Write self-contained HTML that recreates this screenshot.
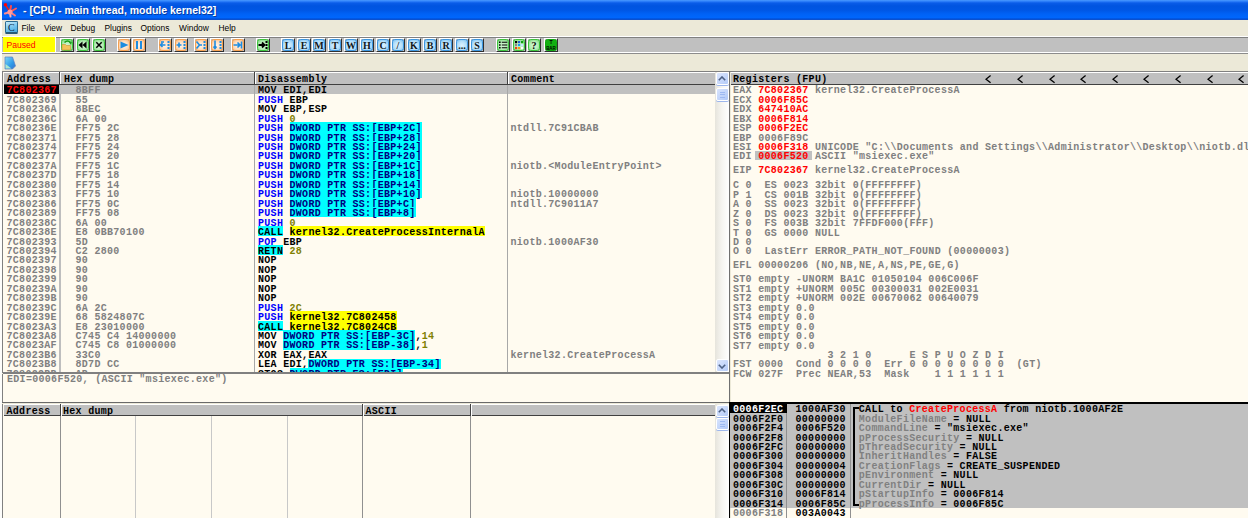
<!DOCTYPE html><html><head><meta charset="utf-8"><style>
html,body{margin:0;padding:0;width:1248px;height:518px;overflow:hidden;background:#ECE9D8;position:relative}
div{position:absolute;box-sizing:border-box}
.t{font-family:"Liberation Mono",monospace;font-weight:bold;font-size:10px;letter-spacing:0.300px;line-height:9.45px;white-space:pre;padding-top:1.5px}
.s{font-family:"Liberation Sans",sans-serif;white-space:pre}
</style></head><body>
<div style="left:0;top:0;width:2px;height:518px;background:#FDFDFB"></div>
<div style="left:2px;top:0;width:1246px;height:20.6px;background:linear-gradient(#4A9AFF 0px,#2A7CF8 1.5px,#0A5CE8 3px,#0054E0 6px,#0056E4 10px,#0062F6 14px,#0066FC 17.5px,#0050DA 19px,#2A50B0 20.6px)"></div>
<svg style="position:absolute;left:2px;top:1px" width="16" height="18" viewBox="0 0 16 18"><g stroke-linecap="round"><line x1="8" y1="11" x2="3.5" y2="4" stroke="#E02020" stroke-width="1.6"/><line x1="8" y1="11" x2="9" y2="5" stroke="#FF4848" stroke-width="2"/><line x1="8" y1="11" x2="14" y2="7.5" stroke="#FF5A5A" stroke-width="2"/><line x1="8" y1="11" x2="13" y2="14.5" stroke="#FF7A7A" stroke-width="2"/><line x1="8" y1="11" x2="8.5" y2="15.5" stroke="#FFB0B0" stroke-width="2"/><line x1="8" y1="11" x2="3" y2="12.5" stroke="#FF8A8A" stroke-width="2.2"/></g><circle cx="3.5" cy="3.8" r="1.7" fill="#FF0000"/><circle cx="8" cy="11" r="2.6" fill="#FF9A9A"/></svg>
<div class="s" style="left:23px;top:3px;font-size:10.5px;font-weight:bold;color:#0A246A;opacity:.6;line-height:14px;transform:translate(1px,1px)">- [CPU - main thread, module kernel32]</div>
<div class="s" style="left:23px;top:3px;font-size:10.5px;font-weight:bold;color:#fff;line-height:14px">- [CPU - main thread, module kernel32]</div>
<div style="left:2px;top:20px;width:1246px;height:17px;background:#ECE9D8"></div>
<div style="left:5px;top:21.2px;width:12.6px;height:13.2px;border-radius:1.5px;background:linear-gradient(160deg,#C6ECFC,#6CC0EC 60%,#4AA8E0);border:1px solid #2A6A90;border-bottom:2px solid #2A5A78"></div>
<div class="s" style="left:5px;top:22.8px;width:12.6px;font-family:'Liberation Serif';font-size:10px;color:#0A2A48;text-align:center;line-height:10px">C</div>
<div class="s" style="left:21.5px;top:22.5px;font-size:8.4px;color:#000;line-height:10px">File</div>
<div class="s" style="left:44px;top:22.5px;font-size:8.4px;color:#000;line-height:10px">View</div>
<div class="s" style="left:70.5px;top:22.5px;font-size:8.4px;color:#000;line-height:10px">Debug</div>
<div class="s" style="left:104.5px;top:22.5px;font-size:8.4px;color:#000;line-height:10px">Plugins</div>
<div class="s" style="left:140.5px;top:22.5px;font-size:8.4px;color:#000;line-height:10px">Options</div>
<div class="s" style="left:179px;top:22.5px;font-size:8.4px;color:#000;line-height:10px">Window</div>
<div class="s" style="left:218.5px;top:22.5px;font-size:8.4px;color:#000;line-height:10px">Help</div>
<div style="left:2px;top:35.6px;width:1246px;height:1px;background:#FFFFFF"></div>
<div style="left:2px;top:36.6px;width:1246px;height:17px;background:#C0C0C0;border-top:1px solid #808080;border-bottom:1px solid #8C8C8C"></div>
<div style="left:2px;top:52.4px;width:1246px;height:0.8px;background:#FFFFFF"></div>
<div style="left:3px;top:37.4px;width:53px;height:15px;background:#FFFF00;border-right:1px solid #fff"></div>
<div class="s" style="left:6.5px;top:40px;font-size:8.6px;color:#FF0000;line-height:10px">Paused</div>
<div style="left:60.2px;top:37.8px;width:14px;height:14px;background:#C0C0C0;border-left:1px solid #FFF;border-top:1px solid #FFF;border-right:1px solid #303030;border-bottom:1px solid #303030"></div>
<div style="left:61.2px;top:38.8px;width:12px;height:12px;background:radial-gradient(circle at 50% 55%,#D8F8D8 0%,#B4ECB4 55%,#6AD46A 100%);border:1px solid #3CC43C;border-radius:2.5px"></div>
<svg style="position:absolute;left:61.2px;top:38.8px" width="12" height="12" viewBox="0 0 12 12"><path d="M1 5.5 h3.5 l1 1 h4 v4.5 h-8.5z" fill="#F2C45A" stroke="#C89030" stroke-width="0.6"/><path d="M3.5 3.5 Q6.5 0.5 9.5 3.5" fill="none" stroke="#18A018" stroke-width="1.6"/><path d="M8 3.2 l3 -0.6 l-1 3.4z" fill="#18A018"/></svg>
<div style="left:75.9px;top:37.8px;width:14px;height:14px;background:#C0C0C0;border-left:1px solid #FFF;border-top:1px solid #FFF;border-right:1px solid #303030;border-bottom:1px solid #303030"></div>
<div style="left:76.9px;top:38.8px;width:12px;height:12px;background:radial-gradient(circle at 50% 55%,#D8F8D8 0%,#B4ECB4 55%,#6AD46A 100%);border:1px solid #3CC43C;border-radius:2.5px"></div>
<svg style="position:absolute;left:76.9px;top:38.8px" width="12" height="12" viewBox="0 0 12 12"><path d="M1.5 6 l4 -3.5 v7z M5.5 6 l4 -3.5 v7z" fill="#000"/></svg>
<div style="left:91.5px;top:37.8px;width:14px;height:14px;background:#C0C0C0;border-left:1px solid #FFF;border-top:1px solid #FFF;border-right:1px solid #303030;border-bottom:1px solid #303030"></div>
<div style="left:92.5px;top:38.8px;width:12px;height:12px;background:radial-gradient(circle at 50% 55%,#D8F8D8 0%,#B4ECB4 55%,#6AD46A 100%);border:1px solid #3CC43C;border-radius:2.5px"></div>
<svg style="position:absolute;left:92.5px;top:38.8px" width="12" height="12" viewBox="0 0 12 12"><path d="M3.3 3.3 l5.4 5.4 M8.7 3.3 l-5.4 5.4" stroke="#000" stroke-width="1.5"/></svg>
<div style="left:116.8px;top:37.8px;width:14px;height:14px;background:#C0C0C0;border-left:1px solid #FFF;border-top:1px solid #FFF;border-right:1px solid #303030;border-bottom:1px solid #303030"></div>
<div style="left:117.8px;top:38.8px;width:12px;height:12px;background:radial-gradient(circle at 50% 55%,#FFF4EA 0%,#FFDCBC 55%,#F8B070 100%);border:1px solid #F5A050;border-radius:2.5px"></div>
<svg style="position:absolute;left:117.8px;top:38.8px" width="12" height="12" viewBox="0 0 12 12"><path d="M2.5 2.5 l8 3.5 l-8 3.5z" fill="#1E8CE0"/></svg>
<div style="left:132.3px;top:37.8px;width:14px;height:14px;background:#C0C0C0;border-left:1px solid #FFF;border-top:1px solid #FFF;border-right:1px solid #303030;border-bottom:1px solid #303030"></div>
<div style="left:133.3px;top:38.8px;width:12px;height:12px;background:radial-gradient(circle at 50% 55%,#FFF4EA 0%,#FFDCBC 55%,#F8B070 100%);border:1px solid #F5A050;border-radius:2.5px"></div>
<svg style="position:absolute;left:133.3px;top:38.8px" width="12" height="12" viewBox="0 0 12 12"><path d="M3 2 h2 v8 h-2z M7 2 h2 v8 h-2z" fill="#1E8CE0"/></svg>
<div style="left:158.0px;top:37.8px;width:14px;height:14px;background:#C0C0C0;border-left:1px solid #FFF;border-top:1px solid #FFF;border-right:1px solid #303030;border-bottom:1px solid #303030"></div>
<div style="left:159.0px;top:38.8px;width:12px;height:12px;background:radial-gradient(circle at 50% 55%,#FFF4EA 0%,#FFDCBC 55%,#F8B070 100%);border:1px solid #F5A050;border-radius:2.5px"></div>
<svg style="position:absolute;left:159.0px;top:38.8px" width="12" height="12" viewBox="0 0 12 12"><path d="M1.5 6 h5 M3.5 4 l-2 2 l2 2 M2 3 h3" stroke="#1E8CE0" stroke-width="1.6" fill="none"/><path d="M8.5 2h2v2h-2z M8.5 5h2v2h-2z M8.5 8h2v2h-2z" fill="#1E8CE0"/></svg>
<div style="left:173.5px;top:37.8px;width:14px;height:14px;background:#C0C0C0;border-left:1px solid #FFF;border-top:1px solid #FFF;border-right:1px solid #303030;border-bottom:1px solid #303030"></div>
<div style="left:174.5px;top:38.8px;width:12px;height:12px;background:radial-gradient(circle at 50% 55%,#FFF4EA 0%,#FFDCBC 55%,#F8B070 100%);border:1px solid #F5A050;border-radius:2.5px"></div>
<svg style="position:absolute;left:174.5px;top:38.8px" width="12" height="12" viewBox="0 0 12 12"><path d="M1.5 6 h5 M4 3.5 v5" stroke="#1E8CE0" stroke-width="1.6" fill="none"/><path d="M8.5 2h2v2h-2z M8.5 5h2v2h-2z M8.5 8h2v2h-2z" fill="#1E8CE0"/></svg>
<div style="left:194.0px;top:37.8px;width:14px;height:14px;background:#C0C0C0;border-left:1px solid #FFF;border-top:1px solid #FFF;border-right:1px solid #303030;border-bottom:1px solid #303030"></div>
<div style="left:195.0px;top:38.8px;width:12px;height:12px;background:radial-gradient(circle at 50% 55%,#FFF4EA 0%,#FFDCBC 55%,#F8B070 100%);border:1px solid #F5A050;border-radius:2.5px"></div>
<svg style="position:absolute;left:195.0px;top:38.8px" width="12" height="12" viewBox="0 0 12 12"><path d="M1.5 2.5 l3 3.5 l-3 3.5 M4 6 h3" stroke="#1E8CE0" stroke-width="1.6" fill="none"/><path d="M8.5 2h2v2h-2z M8.5 5h2v2h-2z M8.5 8h2v2h-2z" fill="#1E8CE0"/></svg>
<div style="left:209.6px;top:37.8px;width:14px;height:14px;background:#C0C0C0;border-left:1px solid #FFF;border-top:1px solid #FFF;border-right:1px solid #303030;border-bottom:1px solid #303030"></div>
<div style="left:210.6px;top:38.8px;width:12px;height:12px;background:radial-gradient(circle at 50% 55%,#FFF4EA 0%,#FFDCBC 55%,#F8B070 100%);border:1px solid #F5A050;border-radius:2.5px"></div>
<svg style="position:absolute;left:210.6px;top:38.8px" width="12" height="12" viewBox="0 0 12 12"><path d="M4 1.5 v8 M2.5 7.5 l1.5 2 l1.5 -2" stroke="#1E8CE0" stroke-width="1.6" fill="none"/><path d="M8.5 2h2v2h-2z M8.5 5h2v2h-2z M8.5 8h2v2h-2z" fill="#1E8CE0"/></svg>
<div style="left:230.6px;top:37.8px;width:14px;height:14px;background:#C0C0C0;border-left:1px solid #FFF;border-top:1px solid #FFF;border-right:1px solid #303030;border-bottom:1px solid #303030"></div>
<div style="left:231.6px;top:38.8px;width:12px;height:12px;background:radial-gradient(circle at 50% 55%,#FFF4EA 0%,#FFDCBC 55%,#F8B070 100%);border:1px solid #F5A050;border-radius:2.5px"></div>
<svg style="position:absolute;left:231.6px;top:38.8px" width="12" height="12" viewBox="0 0 12 12"><path d="M1.5 6 h6 M5.5 3.5 l2.5 2.5 l-2.5 2.5 M9.5 2.5 v7" stroke="#1E8CE0" stroke-width="1.6" fill="none"/></svg>
<div style="left:256.3px;top:37.8px;width:14px;height:14px;background:#C0C0C0;border-left:1px solid #FFF;border-top:1px solid #FFF;border-right:1px solid #303030;border-bottom:1px solid #303030"></div>
<div style="left:257.3px;top:38.8px;width:12px;height:12px;background:radial-gradient(circle at 50% 55%,#D8F8D8 0%,#B4ECB4 55%,#6AD46A 100%);border:1px solid #3CC43C;border-radius:2.5px"></div>
<svg style="position:absolute;left:257.3px;top:38.8px" width="12" height="12" viewBox="0 0 12 12"><path d="M1.5 6 h5 M5 3.5 l2.5 2.5 l-2.5 2.5" stroke="#000" stroke-width="1.8" fill="none"/><path d="M8.5 2h2v2h-2z M8.5 5h2v2h-2z M8.5 8h2v2h-2z" fill="#000"/></svg>
<div style="left:281.1px;top:37.8px;width:14px;height:14px;background:#C0C0C0;border-left:1px solid #FFF;border-top:1px solid #FFF;border-right:1px solid #303030;border-bottom:1px solid #303030"></div>
<div style="left:282.1px;top:38.8px;width:12px;height:12px;background:radial-gradient(circle at 50% 55%,#DDF2FF 0%,#B6E0FA 55%,#6CBAF0 100%);border:1px solid #3C96E0;border-radius:2.5px"></div>
<svg style="position:absolute;left:282.1px;top:38.8px" width="12" height="12" viewBox="0 0 12 12"><text x="6" y="9.6" text-anchor="middle" font-family="Liberation Serif" font-weight="bold" font-size="10" fill="#101820">L</text></svg>
<div style="left:296.7px;top:37.8px;width:14px;height:14px;background:#C0C0C0;border-left:1px solid #FFF;border-top:1px solid #FFF;border-right:1px solid #303030;border-bottom:1px solid #303030"></div>
<div style="left:297.7px;top:38.8px;width:12px;height:12px;background:radial-gradient(circle at 50% 55%,#DDF2FF 0%,#B6E0FA 55%,#6CBAF0 100%);border:1px solid #3C96E0;border-radius:2.5px"></div>
<svg style="position:absolute;left:297.7px;top:38.8px" width="12" height="12" viewBox="0 0 12 12"><text x="6" y="9.6" text-anchor="middle" font-family="Liberation Serif" font-weight="bold" font-size="10" fill="#101820">E</text></svg>
<div style="left:312.4px;top:37.8px;width:14px;height:14px;background:#C0C0C0;border-left:1px solid #FFF;border-top:1px solid #FFF;border-right:1px solid #303030;border-bottom:1px solid #303030"></div>
<div style="left:313.4px;top:38.8px;width:12px;height:12px;background:radial-gradient(circle at 50% 55%,#DDF2FF 0%,#B6E0FA 55%,#6CBAF0 100%);border:1px solid #3C96E0;border-radius:2.5px"></div>
<svg style="position:absolute;left:313.4px;top:38.8px" width="12" height="12" viewBox="0 0 12 12"><text x="6" y="9.6" text-anchor="middle" font-family="Liberation Serif" font-weight="bold" font-size="10" fill="#101820">M</text></svg>
<div style="left:328.4px;top:37.8px;width:14px;height:14px;background:#C0C0C0;border-left:1px solid #FFF;border-top:1px solid #FFF;border-right:1px solid #303030;border-bottom:1px solid #303030"></div>
<div style="left:329.4px;top:38.8px;width:12px;height:12px;background:radial-gradient(circle at 50% 55%,#DDF2FF 0%,#B6E0FA 55%,#6CBAF0 100%);border:1px solid #3C96E0;border-radius:2.5px"></div>
<svg style="position:absolute;left:329.4px;top:38.8px" width="12" height="12" viewBox="0 0 12 12"><text x="6" y="9.6" text-anchor="middle" font-family="Liberation Serif" font-weight="bold" font-size="10" fill="#101820">T</text></svg>
<div style="left:344.0px;top:37.8px;width:14px;height:14px;background:#C0C0C0;border-left:1px solid #FFF;border-top:1px solid #FFF;border-right:1px solid #303030;border-bottom:1px solid #303030"></div>
<div style="left:345.0px;top:38.8px;width:12px;height:12px;background:radial-gradient(circle at 50% 55%,#DDF2FF 0%,#B6E0FA 55%,#6CBAF0 100%);border:1px solid #3C96E0;border-radius:2.5px"></div>
<svg style="position:absolute;left:345.0px;top:38.8px" width="12" height="12" viewBox="0 0 12 12"><text x="6" y="9.6" text-anchor="middle" font-family="Liberation Serif" font-weight="bold" font-size="10" fill="#101820">W</text></svg>
<div style="left:360.0px;top:37.8px;width:14px;height:14px;background:#C0C0C0;border-left:1px solid #FFF;border-top:1px solid #FFF;border-right:1px solid #303030;border-bottom:1px solid #303030"></div>
<div style="left:361.0px;top:38.8px;width:12px;height:12px;background:radial-gradient(circle at 50% 55%,#DDF2FF 0%,#B6E0FA 55%,#6CBAF0 100%);border:1px solid #3C96E0;border-radius:2.5px"></div>
<svg style="position:absolute;left:361.0px;top:38.8px" width="12" height="12" viewBox="0 0 12 12"><text x="6" y="9.6" text-anchor="middle" font-family="Liberation Serif" font-weight="bold" font-size="10" fill="#101820">H</text></svg>
<div style="left:375.7px;top:37.8px;width:14px;height:14px;background:#C0C0C0;border-left:1px solid #FFF;border-top:1px solid #FFF;border-right:1px solid #303030;border-bottom:1px solid #303030"></div>
<div style="left:376.7px;top:38.8px;width:12px;height:12px;background:radial-gradient(circle at 50% 55%,#DDF2FF 0%,#B6E0FA 55%,#6CBAF0 100%);border:1px solid #3C96E0;border-radius:2.5px"></div>
<svg style="position:absolute;left:376.7px;top:38.8px" width="12" height="12" viewBox="0 0 12 12"><text x="6" y="9.6" text-anchor="middle" font-family="Liberation Serif" font-weight="bold" font-size="10" fill="#101820">C</text></svg>
<div style="left:391.2px;top:37.8px;width:14px;height:14px;background:#C0C0C0;border-left:1px solid #FFF;border-top:1px solid #FFF;border-right:1px solid #303030;border-bottom:1px solid #303030"></div>
<div style="left:392.2px;top:38.8px;width:12px;height:12px;background:radial-gradient(circle at 50% 55%,#DDF2FF 0%,#B6E0FA 55%,#6CBAF0 100%);border:1px solid #3C96E0;border-radius:2.5px"></div>
<svg style="position:absolute;left:392.2px;top:38.8px" width="12" height="12" viewBox="0 0 12 12"><text x="6" y="9.6" text-anchor="middle" font-family="Liberation Serif" font-weight="bold" font-size="10" fill="#101820">/</text></svg>
<div style="left:407.3px;top:37.8px;width:14px;height:14px;background:#C0C0C0;border-left:1px solid #FFF;border-top:1px solid #FFF;border-right:1px solid #303030;border-bottom:1px solid #303030"></div>
<div style="left:408.3px;top:38.8px;width:12px;height:12px;background:radial-gradient(circle at 50% 55%,#DDF2FF 0%,#B6E0FA 55%,#6CBAF0 100%);border:1px solid #3C96E0;border-radius:2.5px"></div>
<svg style="position:absolute;left:408.3px;top:38.8px" width="12" height="12" viewBox="0 0 12 12"><text x="6" y="9.6" text-anchor="middle" font-family="Liberation Serif" font-weight="bold" font-size="10" fill="#101820">K</text></svg>
<div style="left:423.0px;top:37.8px;width:14px;height:14px;background:#C0C0C0;border-left:1px solid #FFF;border-top:1px solid #FFF;border-right:1px solid #303030;border-bottom:1px solid #303030"></div>
<div style="left:424.0px;top:38.8px;width:12px;height:12px;background:radial-gradient(circle at 50% 55%,#DDF2FF 0%,#B6E0FA 55%,#6CBAF0 100%);border:1px solid #3C96E0;border-radius:2.5px"></div>
<svg style="position:absolute;left:424.0px;top:38.8px" width="12" height="12" viewBox="0 0 12 12"><text x="6" y="9.6" text-anchor="middle" font-family="Liberation Serif" font-weight="bold" font-size="10" fill="#101820">B</text></svg>
<div style="left:438.7px;top:37.8px;width:14px;height:14px;background:#C0C0C0;border-left:1px solid #FFF;border-top:1px solid #FFF;border-right:1px solid #303030;border-bottom:1px solid #303030"></div>
<div style="left:439.7px;top:38.8px;width:12px;height:12px;background:radial-gradient(circle at 50% 55%,#DDF2FF 0%,#B6E0FA 55%,#6CBAF0 100%);border:1px solid #3C96E0;border-radius:2.5px"></div>
<svg style="position:absolute;left:439.7px;top:38.8px" width="12" height="12" viewBox="0 0 12 12"><text x="6" y="9.6" text-anchor="middle" font-family="Liberation Serif" font-weight="bold" font-size="10" fill="#101820">R</text></svg>
<div style="left:454.7px;top:37.8px;width:14px;height:14px;background:#C0C0C0;border-left:1px solid #FFF;border-top:1px solid #FFF;border-right:1px solid #303030;border-bottom:1px solid #303030"></div>
<div style="left:455.7px;top:38.8px;width:12px;height:12px;background:radial-gradient(circle at 50% 55%,#DDF2FF 0%,#B6E0FA 55%,#6CBAF0 100%);border:1px solid #3C96E0;border-radius:2.5px"></div>
<svg style="position:absolute;left:455.7px;top:38.8px" width="12" height="12" viewBox="0 0 12 12"><text x="6" y="9.6" text-anchor="middle" font-family="Liberation Serif" font-weight="bold" font-size="10" fill="#101820">...</text></svg>
<div style="left:470.3px;top:37.8px;width:14px;height:14px;background:#C0C0C0;border-left:1px solid #FFF;border-top:1px solid #FFF;border-right:1px solid #303030;border-bottom:1px solid #303030"></div>
<div style="left:471.3px;top:38.8px;width:12px;height:12px;background:radial-gradient(circle at 50% 55%,#DDF2FF 0%,#B6E0FA 55%,#6CBAF0 100%);border:1px solid #3C96E0;border-radius:2.5px"></div>
<svg style="position:absolute;left:471.3px;top:38.8px" width="12" height="12" viewBox="0 0 12 12"><text x="6" y="9.6" text-anchor="middle" font-family="Liberation Serif" font-weight="bold" font-size="10" fill="#101820">S</text></svg>
<div style="left:495.9px;top:37.8px;width:14px;height:14px;background:#C0C0C0;border-left:1px solid #FFF;border-top:1px solid #FFF;border-right:1px solid #303030;border-bottom:1px solid #303030"></div>
<div style="left:496.9px;top:38.8px;width:12px;height:12px;background:radial-gradient(circle at 50% 55%,#D8F8D8 0%,#B4ECB4 55%,#6AD46A 100%);border:1px solid #3CC43C;border-radius:2.5px"></div>
<svg style="position:absolute;left:496.9px;top:38.8px" width="12" height="12" viewBox="0 0 12 12"><path d="M2 2.5h1.6v1.6h-1.6z M2 5.2h1.6v1.6h-1.6z M2 7.9h1.6v1.6h-1.6z" fill="#000"/><path d="M4.8 3.3h5.5 M4.8 6h5.5 M4.8 8.7h5.5" stroke="#000" stroke-width="1.1"/></svg>
<div style="left:511.6px;top:37.8px;width:14px;height:14px;background:#C0C0C0;border-left:1px solid #FFF;border-top:1px solid #FFF;border-right:1px solid #303030;border-bottom:1px solid #303030"></div>
<div style="left:512.6px;top:38.8px;width:12px;height:12px;background:radial-gradient(circle at 50% 55%,#D8F8D8 0%,#B4ECB4 55%,#6AD46A 100%);border:1px solid #3CC43C;border-radius:2.5px"></div>
<svg style="position:absolute;left:512.6px;top:38.8px" width="12" height="12" viewBox="0 0 12 12"><rect x="2" y="2" width="2.2" height="2.2" fill="#000"/><rect x="5" y="2" width="2.2" height="2.2" fill="#2060D0"/><rect x="8" y="2" width="2.2" height="2.2" fill="#10A010"/><rect x="2" y="5" width="2.2" height="2.2" fill="#888"/><rect x="5" y="5" width="2.2" height="2.2" fill="#10A0F0"/><rect x="8" y="5" width="2.2" height="2.2" fill="#C0E8FF"/><rect x="2" y="8" width="2.2" height="2.2" fill="#F04010"/><rect x="5" y="8" width="2.2" height="2.2" fill="#F0A010"/><rect x="8" y="8" width="2.2" height="2.2" fill="#FFF"/></svg>
<div style="left:527.2px;top:37.8px;width:14px;height:14px;background:#C0C0C0;border-left:1px solid #FFF;border-top:1px solid #FFF;border-right:1px solid #303030;border-bottom:1px solid #303030"></div>
<div style="left:528.2px;top:38.8px;width:12px;height:12px;background:radial-gradient(circle at 50% 55%,#D8F8D8 0%,#B4ECB4 55%,#6AD46A 100%);border:1px solid #3CC43C;border-radius:2.5px"></div>
<svg style="position:absolute;left:528.2px;top:38.8px" width="12" height="12" viewBox="0 0 12 12"><text x="6" y="9.5" text-anchor="middle" font-family="Liberation Serif" font-weight="bold" font-size="10" fill="#000">?</text></svg>
<div style="left:544.0px;top:37.8px;width:14px;height:14px;background:#C0C0C0;border-left:1px solid #FFF;border-top:1px solid #FFF;border-right:1px solid #303030;border-bottom:1px solid #303030"></div>
<div style="left:545.0px;top:38.8px;width:12px;height:12px;background:#12B012;border:1px solid #10A810;border-radius:2.5px"></div>
<svg style="position:absolute;left:545.0px;top:38.8px" width="12" height="12" viewBox="0 0 12 12"><text x="6" y="5" text-anchor="middle" font-family="Liberation Sans" font-weight="bold" font-size="5" fill="#000">T</text><text x="6" y="10.5" text-anchor="middle" font-family="Liberation Sans" font-weight="bold" font-size="4.5" fill="#000">BAR</text></svg>
<svg style="position:absolute;left:4px;top:56px" width="12" height="14" viewBox="0 0 12 14"><defs><linearGradient id="ig" x1="0" y1="0" x2="1" y2="1"><stop offset="0" stop-color="#7FD8F8"/><stop offset="0.6" stop-color="#2E9BE8"/><stop offset="1" stop-color="#3A70C8"/></linearGradient></defs><path d="M1 1 h7.5 l3 9 l-3 3 h-7.5z" fill="url(#ig)" stroke="#5A7FC0" stroke-width="0.7"/><path d="M1.5 8 l0 4.5 h6 z" fill="#C8F8C8" opacity="0.8"/></svg>
<div style="left:2.00px;top:70.50px;width:1246.00px;height:1.00px;background:#808080"></div>
<div style="left:2.00px;top:71.50px;width:712.80px;height:301.00px;background:#FFFBF0;border-left:1.8px solid #808080"></div>
<div style="left:3.80px;top:71.50px;width:711.20px;height:13.00px;background:#C0C0C0;border-top:1px solid #FFFFFF;border-bottom:1px solid #404040"></div>
<div style="left:59.40px;top:72.00px;width:1.00px;height:12.30px;background:#404040"></div>
<div style="left:60.40px;top:72.00px;width:1.00px;height:12.30px;background:#FFFFFF"></div>
<div style="left:253.60px;top:72.00px;width:1.00px;height:12.30px;background:#404040"></div>
<div style="left:254.60px;top:72.00px;width:1.00px;height:12.30px;background:#FFFFFF"></div>
<div style="left:507.00px;top:72.00px;width:1.00px;height:12.30px;background:#404040"></div>
<div style="left:508.00px;top:72.00px;width:1.00px;height:12.30px;background:#FFFFFF"></div>
<div class="t" style="left:7.00px;top:73.30px;color:#000;">Address</div>
<div class="t" style="left:64.00px;top:73.30px;color:#000;">Hex dump</div>
<div class="t" style="left:258.00px;top:73.30px;color:#000;">Disassembly</div>
<div class="t" style="left:511.00px;top:73.30px;color:#000;">Comment</div>
<div style="left:3.80px;top:84.80px;width:711.20px;height:9.45px;background:#C0C0C0"></div>
<div style="left:59.00px;top:84.50px;width:1.90px;height:288.00px;background:#BEBEBE"></div>
<div style="left:253.80px;top:84.50px;width:1.30px;height:288.00px;background:#A8A8A8"></div>
<div style="left:507.00px;top:84.50px;width:1.30px;height:288.00px;background:#A8A8A8"></div>
<div style="left:3.80px;top:85.00px;width:55.70px;height:9.25px;background:#000"></div>
<div class="t" style="left:6.50px;top:84.80px;color:#FF0000;">7C802367</div>
<div class="t" style="left:75.50px;top:84.80px;color:#808080;">8BFF</div>
<div class="t" style="left:258.00px;top:84.80px;color:#000;">MOV EDI,EDI</div>
<div class="t" style="left:6.50px;top:94.25px;color:#808080;">7C802369</div>
<div class="t" style="left:75.50px;top:94.25px;color:#808080;">55</div>
<div class="t" style="left:258.00px;top:94.25px;color:#0000FF;">PUSH</div>
<div class="t" style="left:289.50px;top:94.25px;color:#000;">EBP</div>
<div class="t" style="left:6.50px;top:103.70px;color:#808080;">7C80236A</div>
<div class="t" style="left:75.50px;top:103.70px;color:#808080;">8BEC</div>
<div class="t" style="left:258.00px;top:103.70px;color:#000;">MOV EBP,ESP</div>
<div class="t" style="left:6.50px;top:113.15px;color:#808080;">7C80236C</div>
<div class="t" style="left:75.50px;top:113.15px;color:#808080;">6A 00</div>
<div class="t" style="left:258.00px;top:113.15px;color:#0000FF;">PUSH</div>
<div class="t" style="left:289.50px;top:113.15px;color:#808000;">0</div>
<div class="t" style="left:6.50px;top:122.60px;color:#808080;">7C80236E</div>
<div class="t" style="left:75.50px;top:122.60px;color:#808080;">FF75 2C</div>
<div class="t" style="left:258.00px;top:122.60px;color:#0000FF;">PUSH</div>
<div style="left:289.50px;top:122.30px;width:132.30px;height:10.05px;background:#00FFFF"></div>
<div class="t" style="left:289.50px;top:122.60px;color:#000080;">DWORD PTR SS:[EBP+2C]</div>
<div class="t" style="left:510.50px;top:122.60px;color:#808080;">ntdll.7C91CBAB</div>
<div class="t" style="left:6.50px;top:132.05px;color:#808080;">7C802371</div>
<div class="t" style="left:75.50px;top:132.05px;color:#808080;">FF75 28</div>
<div class="t" style="left:258.00px;top:132.05px;color:#0000FF;">PUSH</div>
<div style="left:289.50px;top:131.75px;width:132.30px;height:10.05px;background:#00FFFF"></div>
<div class="t" style="left:289.50px;top:132.05px;color:#000080;">DWORD PTR SS:[EBP+28]</div>
<div class="t" style="left:6.50px;top:141.50px;color:#808080;">7C802374</div>
<div class="t" style="left:75.50px;top:141.50px;color:#808080;">FF75 24</div>
<div class="t" style="left:258.00px;top:141.50px;color:#0000FF;">PUSH</div>
<div style="left:289.50px;top:141.20px;width:132.30px;height:10.05px;background:#00FFFF"></div>
<div class="t" style="left:289.50px;top:141.50px;color:#000080;">DWORD PTR SS:[EBP+24]</div>
<div class="t" style="left:6.50px;top:150.95px;color:#808080;">7C802377</div>
<div class="t" style="left:75.50px;top:150.95px;color:#808080;">FF75 20</div>
<div class="t" style="left:258.00px;top:150.95px;color:#0000FF;">PUSH</div>
<div style="left:289.50px;top:150.65px;width:132.30px;height:10.05px;background:#00FFFF"></div>
<div class="t" style="left:289.50px;top:150.95px;color:#000080;">DWORD PTR SS:[EBP+20]</div>
<div class="t" style="left:6.50px;top:160.40px;color:#808080;">7C80237A</div>
<div class="t" style="left:75.50px;top:160.40px;color:#808080;">FF75 1C</div>
<div class="t" style="left:258.00px;top:160.40px;color:#0000FF;">PUSH</div>
<div style="left:289.50px;top:160.10px;width:132.30px;height:10.05px;background:#00FFFF"></div>
<div class="t" style="left:289.50px;top:160.40px;color:#000080;">DWORD PTR SS:[EBP+1C]</div>
<div class="t" style="left:510.50px;top:160.40px;color:#808080;">niotb.&lt;ModuleEntryPoint&gt;</div>
<div class="t" style="left:6.50px;top:169.85px;color:#808080;">7C80237D</div>
<div class="t" style="left:75.50px;top:169.85px;color:#808080;">FF75 18</div>
<div class="t" style="left:258.00px;top:169.85px;color:#0000FF;">PUSH</div>
<div style="left:289.50px;top:169.55px;width:132.30px;height:10.05px;background:#00FFFF"></div>
<div class="t" style="left:289.50px;top:169.85px;color:#000080;">DWORD PTR SS:[EBP+18]</div>
<div class="t" style="left:6.50px;top:179.30px;color:#808080;">7C802380</div>
<div class="t" style="left:75.50px;top:179.30px;color:#808080;">FF75 14</div>
<div class="t" style="left:258.00px;top:179.30px;color:#0000FF;">PUSH</div>
<div style="left:289.50px;top:179.00px;width:132.30px;height:10.05px;background:#00FFFF"></div>
<div class="t" style="left:289.50px;top:179.30px;color:#000080;">DWORD PTR SS:[EBP+14]</div>
<div class="t" style="left:6.50px;top:188.75px;color:#808080;">7C802383</div>
<div class="t" style="left:75.50px;top:188.75px;color:#808080;">FF75 10</div>
<div class="t" style="left:258.00px;top:188.75px;color:#0000FF;">PUSH</div>
<div style="left:289.50px;top:188.45px;width:132.30px;height:10.05px;background:#00FFFF"></div>
<div class="t" style="left:289.50px;top:188.75px;color:#000080;">DWORD PTR SS:[EBP+10]</div>
<div class="t" style="left:510.50px;top:188.75px;color:#808080;">niotb.10000000</div>
<div class="t" style="left:6.50px;top:198.20px;color:#808080;">7C802386</div>
<div class="t" style="left:75.50px;top:198.20px;color:#808080;">FF75 0C</div>
<div class="t" style="left:258.00px;top:198.20px;color:#0000FF;">PUSH</div>
<div style="left:289.50px;top:197.90px;width:126.00px;height:10.05px;background:#00FFFF"></div>
<div class="t" style="left:289.50px;top:198.20px;color:#000080;">DWORD PTR SS:[EBP+C]</div>
<div class="t" style="left:510.50px;top:198.20px;color:#808080;">ntdll.7C9011A7</div>
<div class="t" style="left:6.50px;top:207.65px;color:#808080;">7C802389</div>
<div class="t" style="left:75.50px;top:207.65px;color:#808080;">FF75 08</div>
<div class="t" style="left:258.00px;top:207.65px;color:#0000FF;">PUSH</div>
<div style="left:289.50px;top:207.35px;width:126.00px;height:10.05px;background:#00FFFF"></div>
<div class="t" style="left:289.50px;top:207.65px;color:#000080;">DWORD PTR SS:[EBP+8]</div>
<div class="t" style="left:6.50px;top:217.10px;color:#808080;">7C80238C</div>
<div class="t" style="left:75.50px;top:217.10px;color:#808080;">6A 00</div>
<div class="t" style="left:258.00px;top:217.10px;color:#0000FF;">PUSH</div>
<div class="t" style="left:289.50px;top:217.10px;color:#808000;">0</div>
<div class="t" style="left:6.50px;top:226.55px;color:#808080;">7C80238E</div>
<div class="t" style="left:75.50px;top:226.55px;color:#808080;">E8 0BB70100</div>
<div style="left:258.00px;top:226.25px;width:25.20px;height:10.05px;background:#00FFFF"></div>
<div class="t" style="left:258.00px;top:226.55px;color:#000;">CALL</div>
<div style="left:289.50px;top:226.25px;width:195.30px;height:10.05px;background:#FFFF00"></div>
<div class="t" style="left:289.50px;top:226.55px;color:#000;">kernel32.CreateProcessInternalA</div>
<div class="t" style="left:6.50px;top:236.00px;color:#808080;">7C802393</div>
<div class="t" style="left:75.50px;top:236.00px;color:#808080;">5D</div>
<div class="t" style="left:258.00px;top:236.00px;color:#0000FF;">POP</div>
<div class="t" style="left:283.20px;top:236.00px;color:#000;">EBP</div>
<div class="t" style="left:510.50px;top:236.00px;color:#808080;">niotb.1000AF30</div>
<div class="t" style="left:6.50px;top:245.45px;color:#808080;">7C802394</div>
<div class="t" style="left:75.50px;top:245.45px;color:#808080;">C2 2800</div>
<div style="left:258.00px;top:245.15px;width:25.20px;height:10.05px;background:#00FFFF"></div>
<div class="t" style="left:258.00px;top:245.45px;color:#000;">RETN</div>
<div class="t" style="left:289.50px;top:245.45px;color:#808000;">28</div>
<div class="t" style="left:6.50px;top:254.90px;color:#808080;">7C802397</div>
<div class="t" style="left:75.50px;top:254.90px;color:#808080;">90</div>
<div class="t" style="left:258.00px;top:254.90px;color:#000;">NOP</div>
<div class="t" style="left:6.50px;top:264.35px;color:#808080;">7C802398</div>
<div class="t" style="left:75.50px;top:264.35px;color:#808080;">90</div>
<div class="t" style="left:258.00px;top:264.35px;color:#000;">NOP</div>
<div class="t" style="left:6.50px;top:273.80px;color:#808080;">7C802399</div>
<div class="t" style="left:75.50px;top:273.80px;color:#808080;">90</div>
<div class="t" style="left:258.00px;top:273.80px;color:#000;">NOP</div>
<div class="t" style="left:6.50px;top:283.25px;color:#808080;">7C80239A</div>
<div class="t" style="left:75.50px;top:283.25px;color:#808080;">90</div>
<div class="t" style="left:258.00px;top:283.25px;color:#000;">NOP</div>
<div class="t" style="left:6.50px;top:292.70px;color:#808080;">7C80239B</div>
<div class="t" style="left:75.50px;top:292.70px;color:#808080;">90</div>
<div class="t" style="left:258.00px;top:292.70px;color:#000;">NOP</div>
<div class="t" style="left:6.50px;top:302.15px;color:#808080;">7C80239C</div>
<div class="t" style="left:75.50px;top:302.15px;color:#808080;">6A 2C</div>
<div class="t" style="left:258.00px;top:302.15px;color:#0000FF;">PUSH</div>
<div class="t" style="left:289.50px;top:302.15px;color:#808000;">2C</div>
<div class="t" style="left:6.50px;top:311.60px;color:#808080;">7C80239E</div>
<div class="t" style="left:75.50px;top:311.60px;color:#808080;">68 5824807C</div>
<div class="t" style="left:258.00px;top:311.60px;color:#0000FF;">PUSH</div>
<div style="left:289.50px;top:311.30px;width:107.10px;height:10.05px;background:#FFFF00"></div>
<div class="t" style="left:289.50px;top:311.60px;color:#000;">kernel32.7C802458</div>
<div class="t" style="left:6.50px;top:321.05px;color:#808080;">7C8023A3</div>
<div class="t" style="left:75.50px;top:321.05px;color:#808080;">E8 23010000</div>
<div style="left:258.00px;top:320.75px;width:25.20px;height:10.05px;background:#00FFFF"></div>
<div class="t" style="left:258.00px;top:321.05px;color:#000;">CALL</div>
<div style="left:289.50px;top:320.75px;width:107.10px;height:10.05px;background:#FFFF00"></div>
<div class="t" style="left:289.50px;top:321.05px;color:#000;">kernel32.7C8024CB</div>
<div class="t" style="left:6.50px;top:330.50px;color:#808080;">7C8023A8</div>
<div class="t" style="left:75.50px;top:330.50px;color:#808080;">C745 C4 14000000</div>
<div class="t" style="left:258.00px;top:330.50px;color:#000;">MOV</div>
<div style="left:283.20px;top:330.20px;width:132.30px;height:10.05px;background:#00FFFF"></div>
<div class="t" style="left:283.20px;top:330.50px;color:#000080;">DWORD PTR SS:[EBP-3C]</div>
<div class="t" style="left:415.50px;top:330.50px;color:#000;">,</div>
<div class="t" style="left:421.80px;top:330.50px;color:#808000;">14</div>
<div class="t" style="left:6.50px;top:339.95px;color:#808080;">7C8023AF</div>
<div class="t" style="left:75.50px;top:339.95px;color:#808080;">C745 C8 01000000</div>
<div class="t" style="left:258.00px;top:339.95px;color:#000;">MOV</div>
<div style="left:283.20px;top:339.65px;width:132.30px;height:10.05px;background:#00FFFF"></div>
<div class="t" style="left:283.20px;top:339.95px;color:#000080;">DWORD PTR SS:[EBP-38]</div>
<div class="t" style="left:415.50px;top:339.95px;color:#000;">,</div>
<div class="t" style="left:421.80px;top:339.95px;color:#808000;">1</div>
<div class="t" style="left:6.50px;top:349.40px;color:#808080;">7C8023B6</div>
<div class="t" style="left:75.50px;top:349.40px;color:#808080;">33C0</div>
<div class="t" style="left:258.00px;top:349.40px;color:#000;">XOR EAX,EAX</div>
<div class="t" style="left:510.50px;top:349.40px;color:#808080;">kernel32.CreateProcessA</div>
<div class="t" style="left:6.50px;top:358.85px;color:#808080;">7C8023B8</div>
<div class="t" style="left:75.50px;top:358.85px;color:#808080;">8D7D CC</div>
<div class="t" style="left:258.00px;top:358.85px;color:#000;">LEA EDI,</div>
<div style="left:308.40px;top:358.55px;width:132.30px;height:10.05px;background:#00FFFF"></div>
<div class="t" style="left:308.40px;top:358.85px;color:#000080;">DWORD PTR SS:[EBP-34]</div>
<div class="t" style="left:6.50px;top:368.30px;color:#808080;">7C8023BB</div>
<div class="t" style="left:75.50px;top:368.30px;color:#808080;">AB</div>
<div class="t" style="left:258.00px;top:368.30px;color:#000;">STOS</div>
<div style="left:289.50px;top:368.00px;width:113.40px;height:10.05px;background:#00FFFF"></div>
<div class="t" style="left:289.50px;top:368.30px;color:#000080;">DWORD PTR ES:[EDI]</div>
<div style="left:715.00px;top:71.50px;width:14.00px;height:301.00px;background:linear-gradient(90deg,#E6E4DC,#F6F5F1 50%,#FFFFFF)"></div>
<div style="left:715.50px;top:72.30px;width:13.00px;height:12.50px;background:linear-gradient(135deg,#DCE6FD,#B4CBF8);border:1px solid #FFFFFF;border-radius:2px;box-shadow:0 1px 0 #9DB6EC"></div>
<svg style="position:absolute;left:718.0px;top:75.8px" width="8" height="5" viewBox="0 0 8 5"><polyline points="0.8,4.2 4,1 7.2,4.2" fill="none" stroke="#4D6185" stroke-width="1.6"/></svg>
<div style="left:715.50px;top:88.20px;width:13.00px;height:12.80px;background:linear-gradient(135deg,#D8E4FD,#B0C8F8);border:1px solid #FFFFFF;border-radius:2px;box-shadow:0 1px 0 #9DB6EC"></div>
<div style="left:719.50px;top:91.50px;width:5.00px;height:1.20px;background:#9DB9F2"></div>
<div style="left:719.50px;top:94.00px;width:5.00px;height:1.20px;background:#9DB9F2"></div>
<div style="left:719.50px;top:96.50px;width:5.00px;height:1.20px;background:#9DB9F2"></div>
<div style="left:715.50px;top:359.30px;width:13.00px;height:12.50px;background:linear-gradient(135deg,#DCE6FD,#B4CBF8);border:1px solid #FFFFFF;border-radius:2px"></div>
<svg style="position:absolute;left:718px;top:363.5px" width="8" height="5" viewBox="0 0 8 5"><polyline points="0.8,0.8 4,4 7.2,0.8" fill="none" stroke="#4D6185" stroke-width="1.6"/></svg>
<div style="left:2.00px;top:373.50px;width:726.80px;height:29.00px;background:#FFFBF0;border-left:1.8px solid #808080"></div>
<div style="left:2.50px;top:372.30px;width:726.50px;height:1.30px;background:#808080"></div>
<div class="t" style="left:7.00px;top:373.60px;color:#808080;">EDI=0006F520, (ASCII &quot;msiexec.exe&quot;)</div>
<div style="left:728.80px;top:70.50px;width:1.50px;height:448.00px;background:#707070"></div>
<div style="left:730.50px;top:71.50px;width:517.50px;height:331.00px;background:#FFFBF0"></div>
<div style="left:730.50px;top:71.50px;width:517.50px;height:13.00px;background:#C0C0C0;border-top:1px solid #FFFFFF;border-bottom:1px solid #404040"></div>
<div class="t" style="left:733.00px;top:73.30px;color:#000;">Registers (FPU)</div>
<svg style="position:absolute;left:985.30px;top:74.5px" width="7" height="9" viewBox="0 0 7 9"><polyline points="5.6,0.6 1,4.2 5.6,7.8" fill="none" stroke="#000" stroke-width="1.3"/></svg>
<svg style="position:absolute;left:1016.92px;top:74.5px" width="7" height="9" viewBox="0 0 7 9"><polyline points="5.6,0.6 1,4.2 5.6,7.8" fill="none" stroke="#000" stroke-width="1.3"/></svg>
<svg style="position:absolute;left:1048.54px;top:74.5px" width="7" height="9" viewBox="0 0 7 9"><polyline points="5.6,0.6 1,4.2 5.6,7.8" fill="none" stroke="#000" stroke-width="1.3"/></svg>
<svg style="position:absolute;left:1080.16px;top:74.5px" width="7" height="9" viewBox="0 0 7 9"><polyline points="5.6,0.6 1,4.2 5.6,7.8" fill="none" stroke="#000" stroke-width="1.3"/></svg>
<svg style="position:absolute;left:1111.78px;top:74.5px" width="7" height="9" viewBox="0 0 7 9"><polyline points="5.6,0.6 1,4.2 5.6,7.8" fill="none" stroke="#000" stroke-width="1.3"/></svg>
<svg style="position:absolute;left:1143.40px;top:74.5px" width="7" height="9" viewBox="0 0 7 9"><polyline points="5.6,0.6 1,4.2 5.6,7.8" fill="none" stroke="#000" stroke-width="1.3"/></svg>
<svg style="position:absolute;left:1175.02px;top:74.5px" width="7" height="9" viewBox="0 0 7 9"><polyline points="5.6,0.6 1,4.2 5.6,7.8" fill="none" stroke="#000" stroke-width="1.3"/></svg>
<svg style="position:absolute;left:1206.64px;top:74.5px" width="7" height="9" viewBox="0 0 7 9"><polyline points="5.6,0.6 1,4.2 5.6,7.8" fill="none" stroke="#000" stroke-width="1.3"/></svg>
<svg style="position:absolute;left:1238.26px;top:74.5px" width="7" height="9" viewBox="0 0 7 9"><polyline points="5.6,0.6 1,4.2 5.6,7.8" fill="none" stroke="#000" stroke-width="1.3"/></svg>
<div style="left:755.20px;top:150.95px;width:56.60px;height:9.45px;background:#C0C0C0"></div>
<div class="t" style="left:733.00px;top:84.80px;color:#808080;">EAX</div>
<div class="t" style="left:758.20px;top:84.80px;color:#FF0000;">7C802367</div>
<div class="t" style="left:814.90px;top:84.80px;color:#808080;">kernel32.CreateProcessA</div>
<div class="t" style="left:733.00px;top:94.25px;color:#808080;">ECX</div>
<div class="t" style="left:758.20px;top:94.25px;color:#FF0000;">0006F85C</div>
<div class="t" style="left:733.00px;top:103.70px;color:#808080;">EDX</div>
<div class="t" style="left:758.20px;top:103.70px;color:#FF0000;">647410AC</div>
<div class="t" style="left:733.00px;top:113.15px;color:#808080;">EBX</div>
<div class="t" style="left:758.20px;top:113.15px;color:#FF0000;">0006F814</div>
<div class="t" style="left:733.00px;top:122.60px;color:#808080;">ESP</div>
<div class="t" style="left:758.20px;top:122.60px;color:#FF0000;">0006F2EC</div>
<div class="t" style="left:733.00px;top:132.05px;color:#808080;">EBP</div>
<div class="t" style="left:758.20px;top:132.05px;color:#808080;">0006F89C</div>
<div class="t" style="left:733.00px;top:141.50px;color:#808080;">ESI</div>
<div class="t" style="left:758.20px;top:141.50px;color:#FF0000;">0006F318</div>
<div class="t" style="left:814.90px;top:141.50px;color:#808080;">UNICODE &quot;C:\\Documents and Settings\\Administrator\\Desktop\\niotb.dll&quot;</div>
<div class="t" style="left:733.00px;top:150.95px;color:#808080;">EDI</div>
<div class="t" style="left:758.20px;top:150.95px;color:#FF0000;">0006F520</div>
<div class="t" style="left:814.90px;top:150.95px;color:#808080;">ASCII &quot;msiexec.exe&quot;</div>
<div class="t" style="left:733.00px;top:164.95px;color:#808080;">EIP</div>
<div class="t" style="left:758.20px;top:164.95px;color:#FF0000;">7C802367</div>
<div class="t" style="left:814.90px;top:164.95px;color:#808080;">kernel32.CreateProcessA</div>
<div class="t" style="left:733.00px;top:179.75px;color:#808080;">C 0  ES 0023 32bit 0(FFFFFFFF)</div>
<div class="t" style="left:733.00px;top:189.20px;color:#808080;">P 1  CS 001B 32bit 0(FFFFFFFF)</div>
<div class="t" style="left:733.00px;top:198.65px;color:#808080;">A 0  SS 0023 32bit 0(FFFFFFFF)</div>
<div class="t" style="left:733.00px;top:208.10px;color:#808080;">Z 0  DS 0023 32bit 0(FFFFFFFF)</div>
<div class="t" style="left:733.00px;top:217.55px;color:#808080;">S 0  FS 003B 32bit 7FFDF000(FFF)</div>
<div class="t" style="left:733.00px;top:227.00px;color:#808080;">T 0  GS 0000 NULL</div>
<div class="t" style="left:733.00px;top:236.45px;color:#808080;">D 0</div>
<div class="t" style="left:733.00px;top:245.90px;color:#808080;">O 0  LastErr ERROR_PATH_NOT_FOUND (00000003)</div>
<div class="t" style="left:733.00px;top:259.90px;color:#808080;">EFL 00000206 (NO,NB,NE,A,NS,PE,GE,G)</div>
<div class="t" style="left:733.00px;top:273.90px;color:#808080;">ST0 empty -UNORM BA1C 01050104 006C006F</div>
<div class="t" style="left:733.00px;top:283.35px;color:#808080;">ST1 empty +UNORM 005C 00300031 002E0031</div>
<div class="t" style="left:733.00px;top:292.80px;color:#808080;">ST2 empty +UNORM 002E 00670062 00640079</div>
<div class="t" style="left:733.00px;top:302.25px;color:#808080;">ST3 empty 0.0</div>
<div class="t" style="left:733.00px;top:311.70px;color:#808080;">ST4 empty 0.0</div>
<div class="t" style="left:733.00px;top:321.15px;color:#808080;">ST5 empty 0.0</div>
<div class="t" style="left:733.00px;top:330.60px;color:#808080;">ST6 empty 0.0</div>
<div class="t" style="left:733.00px;top:340.05px;color:#808080;">ST7 empty 0.0</div>
<div class="t" style="left:733.00px;top:349.50px;color:#808080;">               3 2 1 0      E S P U O Z D I</div>
<div class="t" style="left:733.00px;top:358.95px;color:#808080;">FST 0000  Cond 0 0 0 0  Err 0 0 0 0 0 0 0 0  (GT)</div>
<div class="t" style="left:733.00px;top:368.40px;color:#808080;">FCW 027F  Prec NEAR,53  Mask    1 1 1 1 1 1</div>
<div style="left:2.00px;top:402.10px;width:727.00px;height:1.40px;background:#6A6A6A"></div>
<div style="left:2.00px;top:403.50px;width:712.80px;height:115.00px;background:#FFFBF0;border-left:1.8px solid #808080"></div>
<div style="left:3.80px;top:403.80px;width:711.20px;height:12.50px;background:#C0C0C0;border-top:1px solid #FFFFFF;border-bottom:1px solid #404040"></div>
<div style="left:59.60px;top:404.30px;width:1.00px;height:11.50px;background:#404040"></div>
<div style="left:60.60px;top:404.30px;width:1.00px;height:11.50px;background:#FFFFFF"></div>
<div style="left:59.60px;top:416.00px;width:1.20px;height:102.00px;background:#909090"></div>
<div style="left:362.20px;top:404.30px;width:1.00px;height:11.50px;background:#404040"></div>
<div style="left:363.20px;top:404.30px;width:1.00px;height:11.50px;background:#FFFFFF"></div>
<div style="left:362.20px;top:416.00px;width:1.20px;height:102.00px;background:#909090"></div>
<div style="left:470.20px;top:404.30px;width:1.00px;height:11.50px;background:#404040"></div>
<div style="left:471.20px;top:404.30px;width:1.00px;height:11.50px;background:#FFFFFF"></div>
<div style="left:470.20px;top:416.00px;width:1.20px;height:102.00px;background:#909090"></div>
<div style="left:135.40px;top:416.00px;width:1.10px;height:102.00px;background:#C8C8C8"></div>
<div style="left:211.30px;top:416.00px;width:1.10px;height:102.00px;background:#C8C8C8"></div>
<div style="left:287.40px;top:416.00px;width:1.10px;height:102.00px;background:#C8C8C8"></div>
<div class="t" style="left:6.50px;top:405.20px;color:#000;">Address</div>
<div class="t" style="left:63.00px;top:405.20px;color:#000;">Hex dump</div>
<div class="t" style="left:365.50px;top:405.20px;color:#000;">ASCII</div>
<div style="left:715.00px;top:403.80px;width:14.00px;height:114.20px;background:linear-gradient(90deg,#E6E4DC,#F6F5F1 50%,#FFFFFF)"></div>
<div style="left:715.50px;top:404.60px;width:13.00px;height:12.50px;background:linear-gradient(135deg,#DCE6FD,#B4CBF8);border:1px solid #FFFFFF;border-radius:2px;box-shadow:0 1px 0 #9DB6EC"></div>
<svg style="position:absolute;left:718.0px;top:408.1px" width="8" height="5" viewBox="0 0 8 5"><polyline points="0.8,4.2 4,1 7.2,4.2" fill="none" stroke="#4D6185" stroke-width="1.6"/></svg>
<div style="left:715.50px;top:417.80px;width:13.00px;height:12.50px;background:linear-gradient(135deg,#D8E4FD,#B0C8F8);border:1px solid #FFFFFF;border-radius:2px;box-shadow:0 1px 0 #9DB6EC"></div>
<div style="left:719.50px;top:421.10px;width:5.00px;height:1.20px;background:#9DB9F2"></div>
<div style="left:719.50px;top:423.60px;width:5.00px;height:1.20px;background:#9DB9F2"></div>
<div style="left:719.50px;top:426.10px;width:5.00px;height:1.20px;background:#9DB9F2"></div>
<div style="left:729.00px;top:402.20px;width:519.00px;height:1.50px;background:#000"></div>
<div style="left:730.50px;top:403.60px;width:517.50px;height:115.00px;background:#FFFBF0"></div>
<div style="left:730.20px;top:403.70px;width:517.80px;height:103.95px;background:#C0C0C0"></div>
<div style="left:786.20px;top:403.70px;width:1.20px;height:115.00px;background:#909090"></div>
<div style="left:849.60px;top:403.70px;width:1.20px;height:115.00px;background:#909090"></div>
<div style="left:729.00px;top:403.70px;width:57.50px;height:9.45px;background:#000"></div>
<div style="left:729.00px;top:403.70px;width:1.25px;height:115.00px;background:#000"></div>
<div class="t" style="left:733.00px;top:403.70px;color:#FFF;">0006F2EC</div>
<div class="t" style="left:795.50px;top:403.70px;color:#000;">1000AF30</div>
<div class="t" style="left:858.80px;top:403.70px;color:#000;">CALL to </div>
<div class="t" style="left:909.20px;top:403.70px;color:#FF0000;">CreateProcessA</div>
<div class="t" style="left:997.40px;top:403.70px;color:#000;"> from niotb.1000AF2E</div>
<div class="t" style="left:733.00px;top:413.15px;color:#000;">0006F2F0</div>
<div class="t" style="left:795.50px;top:413.15px;color:#000;">00000000</div>
<div class="t" style="left:858.80px;top:413.15px;color:#808080;">ModuleFileName</div>
<div class="t" style="left:947.00px;top:413.15px;color:#000;"> = NULL</div>
<div class="t" style="left:733.00px;top:422.60px;color:#000;">0006F2F4</div>
<div class="t" style="left:795.50px;top:422.60px;color:#000;">0006F520</div>
<div class="t" style="left:858.80px;top:422.60px;color:#808080;">CommandLine</div>
<div class="t" style="left:928.10px;top:422.60px;color:#000;"> = &quot;msiexec.exe&quot;</div>
<div class="t" style="left:733.00px;top:432.05px;color:#000;">0006F2F8</div>
<div class="t" style="left:795.50px;top:432.05px;color:#000;">00000000</div>
<div class="t" style="left:858.80px;top:432.05px;color:#808080;">pProcessSecurity</div>
<div class="t" style="left:959.60px;top:432.05px;color:#000;"> = NULL</div>
<div class="t" style="left:733.00px;top:441.50px;color:#000;">0006F2FC</div>
<div class="t" style="left:795.50px;top:441.50px;color:#000;">00000000</div>
<div class="t" style="left:858.80px;top:441.50px;color:#808080;">pThreadSecurity</div>
<div class="t" style="left:953.30px;top:441.50px;color:#000;"> = NULL</div>
<div class="t" style="left:733.00px;top:450.95px;color:#000;">0006F300</div>
<div class="t" style="left:795.50px;top:450.95px;color:#000;">00000000</div>
<div class="t" style="left:858.80px;top:450.95px;color:#808080;">InheritHandles</div>
<div class="t" style="left:947.00px;top:450.95px;color:#000;"> = FALSE</div>
<div class="t" style="left:733.00px;top:460.40px;color:#000;">0006F304</div>
<div class="t" style="left:795.50px;top:460.40px;color:#000;">00000004</div>
<div class="t" style="left:858.80px;top:460.40px;color:#808080;">CreationFlags</div>
<div class="t" style="left:940.70px;top:460.40px;color:#000;"> = CREATE_SUSPENDED</div>
<div class="t" style="left:733.00px;top:469.85px;color:#000;">0006F308</div>
<div class="t" style="left:795.50px;top:469.85px;color:#000;">00000000</div>
<div class="t" style="left:858.80px;top:469.85px;color:#808080;">pEnvironment</div>
<div class="t" style="left:934.40px;top:469.85px;color:#000;"> = NULL</div>
<div class="t" style="left:733.00px;top:479.30px;color:#000;">0006F30C</div>
<div class="t" style="left:795.50px;top:479.30px;color:#000;">00000000</div>
<div class="t" style="left:858.80px;top:479.30px;color:#808080;">CurrentDir</div>
<div class="t" style="left:921.80px;top:479.30px;color:#000;"> = NULL</div>
<div class="t" style="left:733.00px;top:488.75px;color:#000;">0006F310</div>
<div class="t" style="left:795.50px;top:488.75px;color:#000;">0006F814</div>
<div class="t" style="left:858.80px;top:488.75px;color:#808080;">pStartupInfo</div>
<div class="t" style="left:934.40px;top:488.75px;color:#000;"> = 0006F814</div>
<div class="t" style="left:733.00px;top:498.20px;color:#000;">0006F314</div>
<div class="t" style="left:795.50px;top:498.20px;color:#000;">0006F85C</div>
<div class="t" style="left:858.80px;top:498.20px;color:#808080;">pProcessInfo</div>
<div class="t" style="left:934.40px;top:498.20px;color:#000;"> = 0006F85C</div>
<div class="t" style="left:733.00px;top:507.65px;color:#808080;">0006F318</div>
<div class="t" style="left:795.50px;top:507.65px;color:#000;">003A0043</div>
<div style="left:853.30px;top:407.00px;width:1.80px;height:99.00px;background:#000"></div>
<div style="left:853.30px;top:407.00px;width:5.80px;height:1.60px;background:#000"></div>
<div style="left:853.30px;top:504.30px;width:5.60px;height:1.60px;background:#000"></div>
</body></html>
